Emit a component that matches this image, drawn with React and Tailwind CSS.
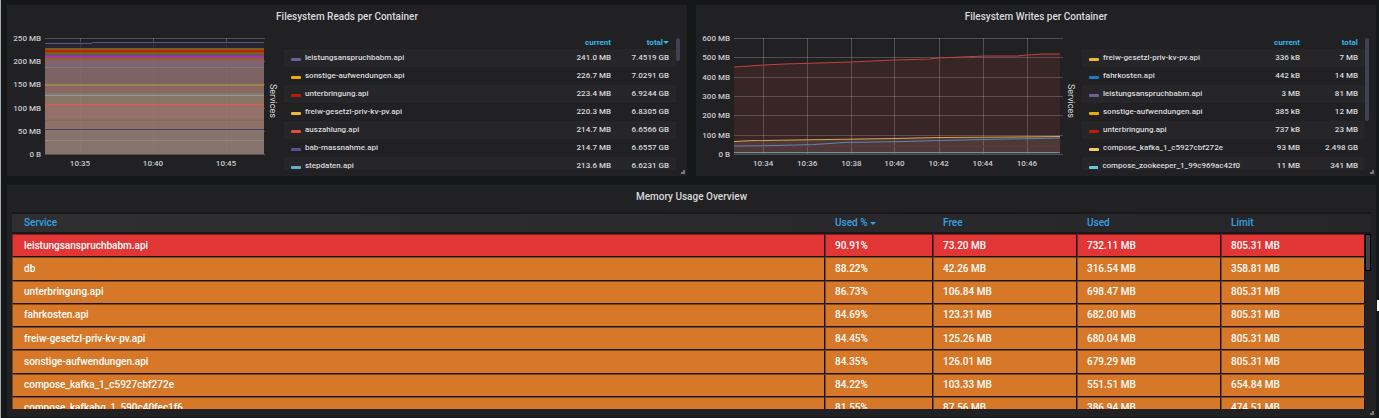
import React from "react";

const readSeries = [
  { name: "leistungsanspruchbabm.api", current: "241.0 MB", total: "7.4519 GB", color: "#705da0" },
  { name: "sonstige-aufwendungen.api", current: "226.7 MB", total: "7.0291 GB", color: "#e5ac0e" },
  { name: "unterbringung.api", current: "223.4 MB", total: "6.9244 GB", color: "#bf1b00" },
  { name: "freiw-gesetzl-priv-kv-pv.api", current: "220.3 MB", total: "6.8305 GB", color: "#eab839" },
  { name: "auszahlung.api", current: "214.7 MB", total: "6.6566 GB", color: "#e24d42" },
  { name: "bab-massnahme.api", current: "214.7 MB", total: "6.6557 GB", color: "#614d93" },
  { name: "stepdaten.api", current: "213.6 MB", total: "6.6231 GB", color: "#64b0c8" },
];

const writeSeries = [
  { name: "freiw-gesetzl-priv-kv-pv.api", current: "336 kB", total: "7 MB", color: "#eab839" },
  { name: "fahrkosten.api", current: "442 kB", total: "14 MB", color: "#1f78c1" },
  { name: "leistungsanspruchbabm.api", current: "3 MB", total: "81 MB", color: "#705da0" },
  { name: "sonstige-aufwendungen.api", current: "385 kB", total: "12 MB", color: "#e5ac0e" },
  { name: "unterbringung.api", current: "737 kB", total: "23 MB", color: "#bf1b00" },
  { name: "compose_kafka_1_c5927cbf272e", current: "93 MB", total: "2.498 GB", color: "#f2c96d" },
  { name: "compose_zookeeper_1_99c969ac42f0", current: "11 MB", total: "341 MB", color: "#65c5db" },
];

const memory = [
  ["leistungsanspruchbabm.api", "90.91%", "73.20 MB", "732.11 MB", "805.31 MB"],
  ["db", "88.22%", "42.26 MB", "316.54 MB", "358.81 MB"],
  ["unterbringung.api", "86.73%", "106.84 MB", "698.47 MB", "805.31 MB"],
  ["fahrkosten.api", "84.69%", "123.31 MB", "682.00 MB", "805.31 MB"],
  ["freiw-gesetzl-priv-kv-pv.api", "84.45%", "125.26 MB", "680.04 MB", "805.31 MB"],
  ["sonstige-aufwendungen.api", "84.35%", "126.01 MB", "679.29 MB", "805.31 MB"],
  ["compose_kafka_1_c5927cbf272e", "84.22%", "103.33 MB", "551.51 MB", "654.84 MB"],
  ["compose_kafkahq_1_590c40fec1f6", "81.55%", "87.56 MB", "386.94 MB", "474.51 MB"],
];

// overlapping area fills of the reads chart: [top, height, fill, opacity]
const readBands = [
  [4, 6, "#2a2835", 0.7],
  [10, 2, "#80601c", 0.95],
  [12, 2, "#b51c06", 1],
  [14, 2, "#80601c", 0.95],
  [16, 3, "#75506f", 0.95],
  [19, 1, "#a335a0", 1],
  [20, 2, "#8b6a35", 0.95],
  [22, 3, "#8e6467", 0.95],
  [25, 3, "#7d6b80", 0.95],
  [28, 18, "#846769", 0.95],
  [46, 2, "#a9854f", 0.95],
  [48, 7, "#8f6c66", 0.95],
  [55, 2, "#99786a", 0.95],
  [57, 8, "#8a7a6c", 0.95],
  [65, 16, "#9a766f", 0.95],
  [81, 10, "#92746c", 0.95],
  [91, 25, "#8c7870", 0.95],
];

// flat series lines: [y, stroke]
const readLines = [
  [12, "#cf1f04"],
  [18, "#a335a0"],
  [29, "#877679"],
  [57, "#7ba3a3"],
  [66, "#e8574a"],
  [82, "#7c7050"],
  [91, "#4d4266"],
  [102, "#998680"],
];

function ReadsPlot() {
  return (
    <g shapeRendering="crispEdges">
      {readBands.map(([y, h, fill, opacity]) => (
        <rect key={y} x="0" y={y} width="219" height={h} fill={fill} fillOpacity={opacity} />
      ))}
      <path d="M0 5.5H44L50 4.5H219" stroke="#5d4f8c" fill="none" />
      {readLines.map(([y, fill]) => (
        <rect key={y} x="0" y={y} width="219" height="1" fill={fill} />
      ))}
    </g>
  );
}

function WritesPlot() {
  return (
    <>
      <path d="M0 29L30 27L50 26L85 25L116 24L160 22L195 21L203 20L250 18H282L292 17L308 16H325V116H0Z" fill="#e24d42" fillOpacity="0.12" />
      <path d="M0 103L160 100L325 98V116H0Z" fill="#b9a588" fillOpacity="0.16" />
      <path d="M0 29L30 27L50 26L85 25L116 24L160 22L195 21L203 20L250 18H282L292 17L308 16H325" stroke="#c0423a" fill="none" />
      <path d="M0 103.5L20 102.5L160 100.5L205 99.5L280 99L325 98.5" stroke="#d9a453" fill="none" />
      <path d="M0 108.5H325" stroke="#65304f" fill="none" />
      <path d="M0 108L40 107.5L80 106.5L110 104.5L170 103.5L205 102.5L250 101.5L325 100" stroke="#5f83b0" fill="none" />
      <path d="M0 114.5H325" stroke="#5f93a8" fill="none" />
    </>
  );
}

function Caret() {
  return (
    <svg viewBox="0 0 6 3" className="inline h-[3px] w-1.5 align-middle" aria-hidden="true">
      <path d="M0 0H6L3 3Z" fill="currentColor" />
    </svg>
  );
}

function Corner() {
  return (
    <svg viewBox="0 0 4 4" className="absolute right-0.5 bottom-0.5 h-1 w-1" aria-hidden="true">
      <path d="M3 0V3H0" stroke="#77787c" strokeWidth="2" fill="none" />
    </svg>
  );
}

function Legend({ items, sorted, thumb }) {
  return (
    <div className="flex h-[132px] overflow-hidden">
      <div className="flex-1">
        <table className="w-full table-fixed text-[8px] leading-[18px] font-medium text-[#d8d9da]">
          <thead>
            <tr className="h-[11px] text-right leading-[9px] text-[#33b5e5]">
              <th aria-label="series" />
              <th className="w-[60px] pb-0.5 font-bold">current</th>
              <th className="w-[65px] pr-[7px] pb-0.5 font-bold whitespace-nowrap">
                total{sorted && <Caret />}
              </th>
            </tr>
          </thead>
          <tbody>
            {items.map((s) => (
              <tr key={s.name} className="h-[18px] odd:bg-[#262628]">
                <td className="whitespace-nowrap">
                  <span className="flex items-center gap-1 pl-[7px]">
                    <svg className="mt-0.5 h-[3px] w-[10px]" aria-hidden="true">
                      <rect width="10" height="3" rx="1" fill={s.color} />
                    </svg>
                    {s.name}
                  </span>
                </td>
                <td className="text-right">{s.current}</td>
                <td className="pr-[7px] text-right">{s.total}</td>
              </tr>
            ))}
          </tbody>
        </table>
      </div>
      <div className={`w-1 shrink-0 rounded-full bg-[#404150] ${thumb}`} />
    </div>
  );
}

function GraphPanel({ title, yLabels, xTicks, width, children, items, sorted, thumb, legendWidth }) {
  return (
    <section className="relative flex-1 bg-[#212124] pb-[5px]">
      <h2 className="pt-1 pb-2.5 text-center text-[10px] leading-[15px] font-medium text-[#d8d9da]">{title}</h2>
      <div className="flex pt-1 pr-[7px]">
        <div className="-mt-1.5 flex h-[129px] w-[34px] shrink-0 flex-col justify-between text-right text-[8px] leading-[13px] font-medium text-[#c8c9cb]">
          {yLabels.map((l) => (
            <span key={l} className="whitespace-nowrap">{l}</span>
          ))}
        </div>
        <div className="ml-1 min-w-0 flex-1">
          <svg viewBox={`0 0 ${width} 117`} preserveAspectRatio="none" className="h-[117px] w-full" aria-label={title}>
            <g fill="#c8c8c8" fillOpacity="0.28" shapeRendering="crispEdges">
              {yLabels.map((l, i) => (
                <rect key={l} x="0" y={Math.round((116 * i) / (yLabels.length - 1))} width={width} height="1" />
              ))}
              {xTicks.map(([l, x]) => (
                <rect key={l} x={x} y="0" width="1" height="116" />
              ))}
            </g>
            {children}
          </svg>
          <div className="relative h-4 text-[8px] leading-[17px] font-medium text-[#c8c9cb]">
            {xTicks.map(([l, x]) => (
              <span key={l} className="absolute -translate-x-1/2" style={{ left: `${(x / width) * 100}%` }}>{l}</span>
            ))}
          </div>
        </div>
        <div className="flex h-[126px] w-[19px] shrink-0 items-center justify-center pr-[3px] text-[9px] leading-[10px] text-[#d8d9da]">
          <span className="[writing-mode:vertical-rl]">Services</span>
        </div>
        <div className={`shrink-0 ${legendWidth}`}>
          <Legend items={items} sorted={sorted} thumb={thumb} />
        </div>
      </div>
      <Corner />
    </section>
  );
}

function MemoryPanel() {
  const head = "h-[22px] border-y-2 border-[#19191b] text-left font-medium";
  return (
    <section className="relative bg-[#212124] px-[5px] pb-2">
      <h2 className="pt-1 pb-2 text-center text-[10px] leading-[15px] font-medium text-[#d8d9da]">Memory Usage Overview</h2>
      <div className="h-[197px] overflow-hidden">
        <table className="h-[208px] w-full table-fixed border-separate border-spacing-0 text-[10px] leading-[14px] font-medium text-white">
          <thead className="bg-linear-to-r from-[#2f2f32] to-[#262628] text-[#33a2e5]">
            <tr>
              <th className={`pl-3 ${head}`}>Service</th>
              <th className={`w-[108px] pl-2.5 ${head}`}>Used % <Caret /></th>
              <th className={`w-36 pl-2.5 ${head}`}>Free</th>
              <th className={`w-36 pl-2.5 ${head}`}>Used</th>
              <th className={`w-36 pl-2.5 ${head}`}>Limit</th>
              <th className={`w-1.5 ${head}`} aria-label="scroll" />
            </tr>
          </thead>
          <tbody>
            {memory.map((row, i) => (
              <tr key={row[0]}>
                {row.map((cell, c) => (
                  <td
                    key={c}
                    className={`border border-t-black/40 border-r-[#16161a] border-b-[#16161a] border-l-black/40 pl-[9px] first:pl-[11px] ${i === 0 ? "bg-[#e23636]" : "bg-[#d67828]"}`}
                  >
                    {cell}
                  </td>
                ))}
                {i === 0 && (
                  <td rowSpan={memory.length} className="align-top">
                    <div className="h-[37px] border border-black bg-[#404148]" />
                  </td>
                )}
              </tr>
            ))}
          </tbody>
        </table>
      </div>
      <Corner />
    </section>
  );
}

export default function App() {
  return (
    <main className="relative flex min-h-screen flex-col gap-[9px] overflow-hidden border-l border-[#a9abae] bg-[#161719] pt-[5px] pr-[3px] pb-0.5 pl-1.5 font-['Roboto',sans-serif]">
      <div className="flex gap-[9px]">
        <GraphPanel
          title="Filesystem Reads per Container"
          yLabels={["250 MB", "200 MB", "150 MB", "100 MB", "50 MB", "0 B"]}
          xTicks={[["10:35", 35], ["10:40", 108], ["10:45", 181]]}
          width={220}
          items={readSeries}
          sorted
          thumb="h-[23px]"
          legendWidth="w-[396px]"
        >
          <ReadsPlot />
        </GraphPanel>
        <GraphPanel
          title="Filesystem Writes per Container"
          yLabels={["600 MB", "500 MB", "400 MB", "300 MB", "200 MB", "100 MB", "0 B"]}
          xTicks={[["10:34", 29], ["10:36", 73], ["10:38", 117], ["10:40", 160], ["10:42", 204], ["10:44", 248], ["10:46", 292]]}
          width={328}
          items={writeSeries}
          thumb="h-[83px]"
          legendWidth="w-[287px]"
        >
          <WritesPlot />
        </GraphPanel>
      </div>
      <MemoryPanel />
      <svg viewBox="0 0 2 11" className="absolute right-0 top-[300px] h-[11px] w-0.5" aria-hidden="true">
        <path d="M0 0H2V11H0Z" fill="#fff" />
      </svg>
    </main>
  );
}
